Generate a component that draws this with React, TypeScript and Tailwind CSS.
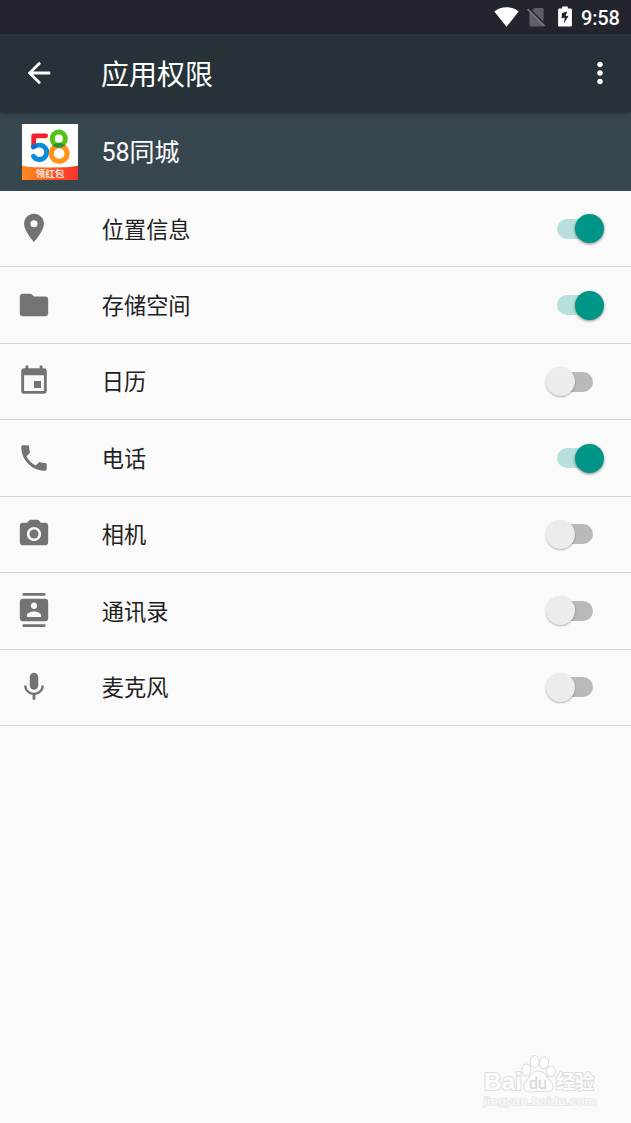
import React, { useState } from 'react';
import {
    MdArrowBack,
    MdCameraAlt,
    MdContacts,
    MdEvent,
    MdFolder,
    MdMic,
    MdMoreVert,
    MdPhone,
    MdPlace,
} from 'react-icons/md';
import type { IconType } from 'react-icons';

type Permission = {
    name: string;
    icon: IconType;
    granted: boolean;
};

const permissions: Permission[] = [
    { name: '位置信息', icon: MdPlace, granted: true },
    { name: '存储空间', icon: MdFolder, granted: true },
    { name: '日历', icon: MdEvent, granted: false },
    { name: '电话', icon: MdPhone, granted: true },
    { name: '相机', icon: MdCameraAlt, granted: false },
    { name: '通讯录', icon: MdContacts, granted: false },
    { name: '麦克风', icon: MdMic, granted: false },
];

const StatusBar: React.FC = () => (
    <div className="flex h-[34px] items-center justify-end bg-[#22252e] pr-[11px] text-white">
        <svg className="h-[20px] w-[25px]" viewBox="0 0 25 20" fill="currentColor">
            <path d="M12.5 19.8 0.3 4.6C3.6 1.8 7.8 0.3 12.5 0.3s8.9 1.5 12.2 4.3z" />
        </svg>
        <svg className="ml-[8px] h-[20px] w-[19px]" viewBox="0 0 19 20">
            <path d="M7.4 1H15a1.6 1.6 0 0 1 1.6 1.6v15.2A1.6 1.6 0 0 1 15 19.4H4a1.6 1.6 0 0 1-1.6-1.6V6z" fill="#5d6065" />
            <path d="M1.6 1.2 18.6 18.2" stroke="#22252e" strokeWidth="2" />
            <path d="M0.6 2.2 17.6 19.2" stroke="#75787c" strokeWidth="1.7" />
        </svg>
        <svg className="mb-px ml-[12px] h-[21px] w-[14px]" viewBox="0 0 14 21">
            <path d="M4.2 0.4h5.6v2.2h2.7c.8 0 1.4.5 1.4 1.3v15.3c0 .8-.6 1.3-1.4 1.3h-11c-.8 0-1.4-.5-1.4-1.3V3.9c0-.8.6-1.3 1.4-1.3h2.700z" fill="#fff" />
            <path d="M9.3 5.6 4 7 3.6 12.2l3.1-.5-.8 5.8 4.7-7.8-3 .4z" fill="#22252e" />
        </svg>
        <span className="ml-[9px] w-[39px] pt-px font-[Roboto,sans-serif] text-[20px] leading-none font-medium tracking-[-0.2px]">9:58</span>
    </div>
);

const AppLogo: React.FC = () => (
    <svg className="h-[56px] w-[56px]" viewBox="0 0 56 56">
        <defs>
            <linearGradient id="banner" x1="0" x2="1" y1="0" y2="0">
                <stop offset="0" stopColor="#ff8a20" />
                <stop offset="1" stopColor="#fb3229" />
            </linearGradient>
            <clipPath id="greenRing">
                <circle cx="36.8" cy="14.7" r="9.1" />
            </clipPath>
        </defs>
        <rect width="56" height="56" fill="#fff" />
        <path d="M23.7 11.8H11.7V22" fill="none" stroke="#f5222d" strokeWidth="4.8" strokeLinecap="round" strokeLinejoin="round" />
        <path d="M11.4 22.8Q14 21.1 17.5 21.1A7.2 7.2 0 1 1 11.5 32.3" fill="none" stroke="#0b8ddb" strokeWidth="4.9" strokeLinecap="round" />
        <path d="M11.4 22.8 13 21.9" stroke="#1668c4" strokeWidth="4.6" strokeLinecap="round" />
        <circle cx="36.8" cy="14.7" r="6.6" fill="none" stroke="#50c314" strokeWidth="5" />
        <circle cx="37.2" cy="29.5" r="7.9" fill="none" stroke="#ff9418" strokeWidth="5.2" />
        <circle cx="37.2" cy="29.5" r="7.9" fill="none" stroke="#21943a" strokeWidth="5.2" clipPath="url(#greenRing)" />
        <path d="M0 41.6Q4 43.5 28 43.5T56 41.6V56H0z" fill="url(#banner)" />
        <text x="28" y="53.2" textAnchor="middle" fill="#fff" fontSize="9.6" fontWeight="500" fontFamily="'Noto Sans CJK SC', sans-serif">
            领红包
        </text>
    </svg>
);

const Switch: React.FC<{ checked: boolean; label: string; onChange: () => void }> = ({ checked, label, onChange }) => (
    <button
        role="switch"
        aria-checked={checked}
        aria-label={label}
        onClick={onChange}
        className={`flex h-[29px] w-[58px] items-center ${checked ? 'justify-end' : 'justify-start'}`}
    >
        {checked ? (
            <>
                <span className="-mr-[18px] h-[20px] w-[36px] rounded-full bg-[#b7e0dc]" />
                <span className="h-[29px] w-[29px] rounded-full bg-[#009687] shadow-[0_1px_3px_rgba(0,0,0,0.45)]" />
            </>
        ) : (
            <>
                <span className="z-10 h-[29px] w-[29px] rounded-full bg-[#ececec] shadow-[0_1px_2px_rgba(0,0,0,0.3)]" />
                <span className="-ml-[18px] h-[20px] w-[36px] rounded-full bg-[#b9b9b9]" />
            </>
        )}
    </button>
);

const Watermark: React.FC = () => (
    <svg
        className="absolute right-[31px] bottom-[10px] h-[60px] w-[120px]"
        viewBox="0 0 120 60"
        fill="#fcfcfc"
        stroke="#dedede"
        strokeWidth="2"
        paintOrder="stroke"
        fontFamily="'Liberation Sans', 'Noto Sans CJK SC', sans-serif"
    >
        <text x="4" y="36.5" fontSize="23" fontWeight="bold" textLength="38" lengthAdjust="spacingAndGlyphs">Bai</text>
        <g strokeWidth="2.2">
            <ellipse cx="46.3" cy="17" rx="4" ry="5.3" />
            <ellipse cx="54.7" cy="8.5" rx="4" ry="5.5" />
            <ellipse cx="64" cy="9.7" rx="4" ry="5.5" transform="rotate(12 64 9.7)" />
            <ellipse cx="71" cy="18.5" rx="4" ry="5" />
            <path d="M58 18.5c5 0 7 4 10 7.5 3.5 3.5 5.5 6 4 9.5-2 4.5-8 2.5-14 2.5s-12 2-13.5-2.5c-1.2-3.5 1-6 4-9.5 3-3.5 4.5-7.500 9.500-7.500z" />
        </g>
        <text x="49" y="35.5" fontSize="16" fill="#d9d9d9" stroke="#d9d9d9" strokeWidth="0.4" textLength="18">du</text>
        <text x="76" y="36" fontSize="19" fontWeight="bold" textLength="38">经验</text>
        <text x="4" y="52" fontSize="11.5" strokeWidth="1.6" stroke="#e6e6e6" textLength="112" lengthAdjust="spacingAndGlyphs">jingyan.baidu.com</text>
    </svg>
);

const App: React.FC = () => {
    const [items, setItems] = useState(permissions);

    const toggle = (name: string) => {
        setItems(items.map((item) => (item.name === name ? { ...item, granted: !item.granted } : item)));
    };

    return (
        <div className="relative h-[1123px] w-full overflow-hidden bg-[#fafafa] font-[Roboto,'Noto_Sans_CJK_SC',sans-serif]">
            <StatusBar />
            <header className="relative flex h-[78px] items-center bg-[#263238] pr-[14px] pl-[22px] text-white shadow-[0_1px_4px_rgba(0,0,0,0.4)]">
                <MdArrowBack className="h-[34px] w-[34px]" />
                <h1 className="ml-[45px] flex-1 pt-[6px] text-[28px] leading-none">应用权限</h1>
                <MdMoreVert className="h-[34px] w-[34px]" />
            </header>
            <div className="flex h-[79px] items-center bg-[#37474f] pl-[22px] text-white">
                <AppLogo />
                <h2 className="ml-[23.5px] pt-[2px] text-[25px] leading-none">58同城</h2>
            </div>
            <ul>
                {items.map(({ name, icon: Icon, granted }) => (
                    <li key={name} className="flex h-[76.45px] items-center border-b border-[#d6d6d6] pr-[27px] pl-[17.4px]">
                        <Icon className="mb-px h-[34px] w-[34px] text-[#737373]" />
                        <span className="ml-[50.4px] flex-1 pt-[2px] text-[22.2px] leading-none text-[#212121]">{name}</span>
                        <Switch checked={granted} label={name} onChange={() => toggle(name)} />
                    </li>
                ))}
            </ul>
            <Watermark />
        </div>
    );
};

export default App;
